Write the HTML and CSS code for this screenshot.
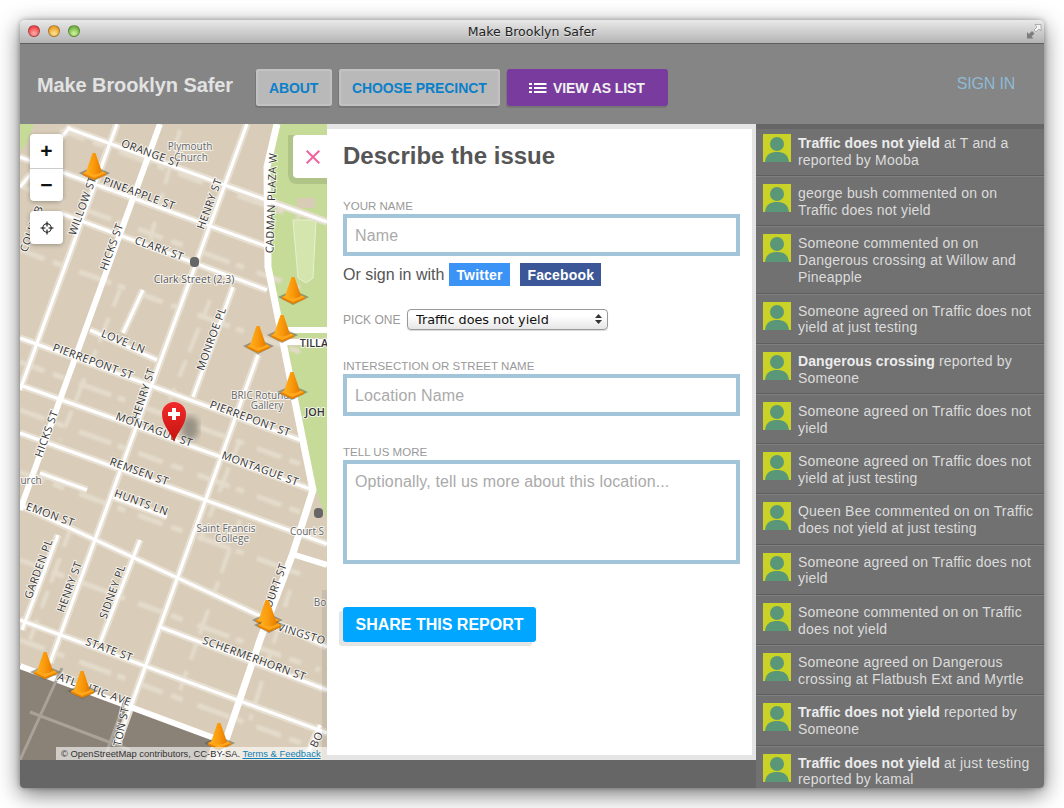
FILE: index.html
```html
<!DOCTYPE html>
<html lang="en">
<head>
<meta charset="utf-8">
<title>Make Brooklyn Safer</title>
<link rel="stylesheet" href="styles.css">
</head>
<body>
<div class="window">
  <div class="titlebar">
    <div class="lights"><span class="light red"></span><span class="light amber"></span><span class="light green"></span></div>
    <div class="win-title">Make Brooklyn Safer</div>
    <svg class="fullscreen" width="16" height="16" viewBox="0 0 16 16"><path d="M1 14.500V8l2 2 3-3 2.500 2.500-3 3 2 2z" fill="#7d7d7d"/><path d="M15 .5V7l-2-2-3 3-2-2 3-3-2-2.500z" fill="#f4f4f4" stroke="#8a8a8a" stroke-width=".6"/></svg>
  </div>
  <header class="topbar">
    <div class="brand">Make Brooklyn Safer</div>
    <nav class="nav">
      <a class="btn">ABOUT</a>
      <a class="btn">CHOOSE PRECINCT</a>
      <a class="btn btn-purple"><svg width="18" height="12" viewBox="0 0 18 12"><path d="M0 1h3v2H0zM0 5h3v2H0zM0 9h3v2H0zM5 1h12.500v2H5zM5 5h12.500v2H5zM5 9h12.500v2H5z" fill="#fff"/></svg>VIEW AS LIST</a>
    </nav>
    <a class="signin">SIGN IN</a>
  </header>
  <div class="content">
    <div class="left">
      <div class="stage">
        <div class="map">
          <svg class="map-art" width="307" height="636" viewBox="20 124 307 636">
            <defs>
              <linearGradient id="coneG" x1="0" x2="1" y1="0" y2="0"><stop offset="0" stop-color="#ffb01e"/><stop offset=".55" stop-color="#f9960a"/><stop offset="1" stop-color="#e27c00"/></linearGradient>
              <linearGradient id="pinG" x1="0" x2="0" y1="0" y2="1"><stop offset="0" stop-color="#f22a2a"/><stop offset="1" stop-color="#c4140f"/></linearGradient>
              <filter id="soft"><feGaussianBlur stdDeviation="3"/></filter>
              <filter id="yardBlur"><feGaussianBlur stdDeviation=".8"/></filter>
              <g id="cone">
                <path d="M-15 20L0 13 16 20 0 28z" fill="#5f5f50" opacity=".55"/>
                <path d="M-11 20L0 15 12 20V22L0 27-11 22z" fill="#e68200"/>
                <path d="M-11 20L0 15 12 20 0 25z" fill="#ffa81c"/>
                <path d="M-1.500 0H1.500L8 19Q0 24-8 19z" fill="url(#coneG)"/>
              </g>
              <g id="roads">
                <path d="M67 128L327 222"/><path d="M20 157L268 247"/><path d="M60 213L267 290"/>
                <path d="M20 338L300 440"/><path d="M20 385L313 490"/><path d="M20 433L327 544"/>
                <path d="M20 505L327 647"/><path d="M20 620L327 733"/>
                <path d="M160 627L327 690"/><path d="M40 473L87 490"/><path d="M113 497L167 517"/>
                <path d="M90 330L157 360"/><path d="M117 124L20 390"/><path d="M70 127L20 187"/>
                <path d="M247 124L50 663"/><path d="M233 287L193 397"/><path d="M258 355L117 745"/>
                <path d="M143 290L123 333"/><path d="M140 540L100 643"/><path d="M58 535L22 630"/>
                <path d="M320 725L305 760"/>
              </g>
            </defs>
            <rect class="ground" x="20" y="124" width="307" height="636"/>

            <path class="park" d="M272 124H327V338H285L270 270 270 170z"/>
            <path class="park" d="M286 346H327V520L316 490z"/>
            <path class="park" d="M20 124H34L26 145 20 150z"/>
            <path class="park-dark" d="M288 135H327V184H298Q288 184 288 174z"/>
            <rect class="lot" x="297" y="198" width="18" height="10"/>
            <path class="field" d="M293 220H316L313 278 306 283 298 278z"/>

            <g class="yards">
              <path d="M20 186L300 288"/><path d="M20 250L300 352"/><path d="M20 362L300 464"/><path d="M20 410L300 512"/>
              <path d="M20 472L300 574"/><path d="M20 560L320 670"/><path d="M20 640L320 750"/><path d="M60 130L300 218"/>
            </g>
            <g class="yards yards-b">
              <path d="M120 290L60 440"/><path d="M210 300L170 400"/><path d="M240 520L180 690"/><path d="M70 530L30 640"/>
              <path d="M180 130L150 240"/><path d="M240 440L200 540"/><path d="M290 590L250 720"/>
            </g>

            <path class="dark-zone" d="M20 664L214 738 206 760H20z"/>

            <use class="roads-under" href="#roads"/>
            <use class="roads-top" href="#roads"/>
            <g class="road-wide">
              <path d="M160 124L20 510"/>
              <path d="M286 330H327"/>
              <path d="M286 342H327"/>
              <path d="M20 666L214 738"/>
              <path d="M295 555L327 565"/>
            </g>
            <path class="road-xl" d="M277 124L267 167 268 267 290 377 313 490 293 553 260 640 227 737 216 760"/>
            <g class="road-dark"><path d="M62 668L20 760"/><path d="M30 712L130 750"/><path d="M125 700L104 760"/></g>

            <g class="lab">
              <text transform="translate(150 157) rotate(20)">ORANGE ST</text>
              <text transform="translate(138 197) rotate(20)">PINEAPPLE ST</text>
              <text transform="translate(158 252) rotate(20)">CLARK ST</text>
              <text transform="translate(213 205) rotate(-70)">HENRY ST</text>
              <text transform="translate(86 207) rotate(-70)">WILLOW ST</text>
              <text transform="translate(115 248) rotate(-70)">HICKS ST</text>
              <text transform="translate(35 230) rotate(-70)">COLUMB</text>
              <text transform="translate(275 203) rotate(-88)">CADMAN PLAZA W</text>
              <text transform="translate(122 345) rotate(22)">LOVE LN</text>
              <text transform="translate(92 365) rotate(20)">PIERREPONT ST</text>
              <text transform="translate(249 422) rotate(20)">PIERREPONT ST</text>
              <text transform="translate(215 340) rotate(-70)">MONROE PL</text>
              <text transform="translate(147 395) rotate(-72)">HENRY ST</text>
              <text transform="translate(153 433) rotate(20)">MONTAGUE ST</text>
              <text transform="translate(259 472) rotate(20)">MONTAGUE ST</text>
              <text transform="translate(50 435) rotate(-70)">HICKS ST</text>
              <text transform="translate(138 475) rotate(20)">REMSEN ST</text>
              <text transform="translate(140 506) rotate(20)">HUNTS LN</text>
              <text transform="translate(49 518) rotate(20)">EMON ST</text>
              <text transform="translate(42 570) rotate(-70)">GARDEN PL</text>
              <text transform="translate(73 588) rotate(-70)">HENRY ST</text>
              <text transform="translate(116 593) rotate(-70)">SIDNEY PL</text>
              <text transform="translate(108 653) rotate(20)">STATE ST</text>
              <text transform="translate(253 662) rotate(20)">SCHERMERHORN ST</text>
              <text transform="translate(93 693) rotate(20)">ATLANTIC AVE</text>
              <text transform="translate(279 587) rotate(-70)">OURT ST</text>
              <text transform="translate(296 636) rotate(17)">LIVINGSTO</text>
              <text transform="translate(125 727) rotate(-78)">TON ST</text>
              <text transform="translate(320 741) rotate(-65)">BO</text>
              <text class="tight" transform="translate(314 347)">TILLA</text>
              <text class="tight" transform="translate(315 416)">JOH</text>
            </g>
            <g class="poi">
              <text x="190" y="150">Plymouth</text>
              <text x="191" y="161">Church</text>
              <text x="194" y="283" class="poi-b">Clark Street (2,3)</text>
              <text x="263" y="399">BRIC Rotunda</text>
              <text x="267" y="409">Gallery</text>
              <text x="226" y="532">Saint Francis</text>
              <text x="232" y="542">College</text>
              <text x="307" y="535">Court S</text>
              <text x="31" y="484">urch</text>
              <text x="320" y="606">Bo</text>
            </g>
            <g class="metro">
              <rect x="190" y="257" width="9" height="10" rx="4"/>
              <rect x="314" y="508" width="9" height="10" rx="4"/>
            </g>
            <rect class="edge-shade" x="322" y="590" width="5" height="170"/>

            <use href="#cone" x="94" y="153"/>
            <use href="#cone" x="293" y="277"/>
            <use href="#cone" x="258" y="326"/>
            <use href="#cone" x="282" y="315"/>
            <use href="#cone" x="292" y="372"/>
            <use href="#cone" x="267" y="600"/>
            <use href="#cone" x="269" y="605"/>
            <use href="#cone" x="45" y="652"/>
            <use href="#cone" x="82" y="671"/>
            <use href="#cone" x="219" y="723"/>

            <ellipse cx="190" cy="428" rx="9" ry="12" fill="#333" opacity=".38" filter="url(#soft)"/>
            <path d="M174 442C170 431 162 425 162 414a12 12 0 1 1 24 0C186 425 178 431 174 442z" fill="url(#pinG)"/>
            <path d="M172 408h4v4h4v4h-4v4h-4v-4h-4v-4h4z" fill="#fff"/>
          </svg>
          <div class="zoom-ctl">
            <button class="ctl">+</button>
            <button class="ctl ctl-minus">&minus;</button>
          </div>
          <button class="locate"><svg width="14" height="14" viewBox="0 0 14 14"><circle cx="7" cy="7" r="4.200" fill="none" stroke="#111" stroke-width="1.100"/><path d="M7 .5v5M7 8.500v5M.5 7h5M8.500 7h5" stroke="#111" stroke-width="1.100"/></svg></button>
          <button class="close-tab"><svg width="14" height="14" viewBox="0 0 14 14"><path d="M.7 .7L13.300 13.300M13.300 .7L.7 13.300" stroke="#f2639d" stroke-width="2"/></svg></button>
          <div class="attrib">&copy; OpenStreetMap contributors, CC-BY-SA. <a>Terms &amp; Feedback</a></div>
        </div>
        <form class="panel">
          <h1>Describe the issue</h1>
          <label class="lbl">YOUR NAME</label>
          <input class="field-input" placeholder="Name">
          <div class="social">
            <span class="or">Or sign in with</span>
            <a class="soc twitter">Twitter</a>
            <a class="soc facebook">Facebook</a>
          </div>
          <div class="pick">
            <label class="lbl lbl-inline">PICK ONE</label>
            <div class="sel-wrap">
              <select class="sel"><option>Traffic does not yield</option></select>
              <svg class="sel-arrows" width="7" height="10" viewBox="0 0 7 10"><path d="M3.500 0L7 4H0zM3.500 10L0 6h7z" fill="#333"/></svg>
            </div>
          </div>
          <label class="lbl lbl-gap">INTERSECTION OR STREET NAME</label>
          <input class="field-input" placeholder="Location Name">
          <label class="lbl lbl-gap">TELL US MORE</label>
          <textarea class="field-input field-area" placeholder="Optionally, tell us more about this location..."></textarea>
          <button class="share" type="button">SHARE THIS REPORT</button>
        </form>
      </div>
      <div class="footer"></div>
    </div>
    <aside class="feed">
      <div class="item"><svg class="ava"><use href="#ava"/></svg><p><b>Traffic does not yield</b> at T and a reported by Mooba</p></div>
      <div class="item"><svg class="ava"><use href="#ava"/></svg><p>george bush commented on on Traffic does not yield</p></div>
      <div class="item"><svg class="ava"><use href="#ava"/></svg><p>Someone commented on on Dangerous crossing at Willow and Pineapple</p></div>
      <div class="item"><svg class="ava"><use href="#ava"/></svg><p>Someone agreed on Traffic does not yield at just testing</p></div>
      <div class="item"><svg class="ava"><use href="#ava"/></svg><p><b>Dangerous crossing</b> reported by Someone</p></div>
      <div class="item"><svg class="ava"><use href="#ava"/></svg><p>Someone agreed on Traffic does not yield</p></div>
      <div class="item"><svg class="ava"><use href="#ava"/></svg><p>Someone agreed on Traffic does not yield at just testing</p></div>
      <div class="item"><svg class="ava"><use href="#ava"/></svg><p>Queen Bee commented on on Traffic does not yield at just testing</p></div>
      <div class="item"><svg class="ava"><use href="#ava"/></svg><p>Someone agreed on Traffic does not yield</p></div>
      <div class="item"><svg class="ava"><use href="#ava"/></svg><p>Someone commented on on Traffic does not yield</p></div>
      <div class="item"><svg class="ava"><use href="#ava"/></svg><p>Someone agreed on Dangerous crossing at Flatbush Ext and Myrtle</p></div>
      <div class="item"><svg class="ava"><use href="#ava"/></svg><p><b>Traffic does not yield</b> reported by Someone</p></div>
      <div class="item"><svg class="ava"><use href="#ava"/></svg><p><b>Traffic does not yield</b> at just testing reported by kamal</p></div>
    </aside>
  </div>
</div>
<svg class="defs-only" width="0" height="0"><defs><g id="ava"><rect width="28" height="28" fill="#c9d227"/><circle cx="14" cy="10" r="7" fill="#5a9678"/><path d="M2 28C3 20 8 18 14 18S25 20 26 28z" fill="#5a9678"/></g></defs></svg>
</body>
</html>
```

FILE: styles.css
```css
* { box-sizing: border-box; }
html, body { margin: 0; height: 100%; background: #fff; overflow: hidden; }
body { padding: 20px; font-family: "Liberation Sans", Arial, sans-serif; }
.defs-only { position: absolute; }

.window {
  width: 1024px; height: 768px; display: flex; flex-direction: column;
  border-radius: 5px 5px 4px 4px; overflow: hidden;
  box-shadow: 0 6px 22px rgba(0,0,0,.55), 0 0 5px rgba(0,0,0,.3);
}

.titlebar {
  height: 24px; flex: none; display: flex; align-items: center; justify-content: center;
  position: relative; background: linear-gradient(#e9e9e9, #b4b4b4);
  border-bottom: 1px solid #5e5e5e;
}
.lights { position: absolute; left: 8px; top: 5px; display: flex; gap: 8px; }
.light { width: 12px; height: 12px; border-radius: 50%; border: 1px solid rgba(0,0,0,.3); }
.red { background: radial-gradient(circle at 50% 75%, #ffb0a8, #f0474c 70%); }
.amber { background: radial-gradient(circle at 50% 75%, #ffe590, #eba02e 70%); }
.green { background: radial-gradient(circle at 50% 75%, #d2f5a0, #74b544 70%); }
.win-title { font: 12.500px "DejaVu Sans", sans-serif; color: #222; text-shadow: 0 1px 0 rgba(255,255,255,.5); }
.fullscreen { position: absolute; right: 2px; top: 4px; }

.topbar {
  height: 80px; flex: none; display: flex; align-items: center; background: #858585;
  padding: 0 29px 0 17px;
}
.brand { font-size: 20px; font-weight: 700; letter-spacing: -.1px; color: #e2e2e2; margin: 2px 22px 0 0; white-space: nowrap; width: 197px; }
.nav { display: flex; gap: 7px; margin-top: 6px; }
.btn {
  height: 37px; padding: 2px 13px 0; display: flex; align-items: center; gap: 6px;
  background: #b9b9b9; color: #0b80c9; font-size: 14px; font-weight: 700; letter-spacing: -.1px;
  border-radius: 3px; box-shadow: -1px 2px 0 #767676, inset 0 0 0 2px #c2c2c2; white-space: nowrap;
}
.btn:nth-child(1) { width: 76px; }
.btn:nth-child(2) { width: 161px; }
.btn-purple { background: #7a3b9f; color: #f1f1f1; width: 161px; padding-left: 22px; box-shadow: -1px 2px 0 #767676; }
.signin { margin-left: auto; font-size: 16px; letter-spacing: -.2px; color: #8ebad5; margin-top: 0; padding-left: 1px; }

.content { flex: 1; display: flex; min-height: 0; }
.left { width: 736px; flex: none; display: flex; flex-direction: column; }
.stage { flex: 1; display: flex; min-height: 0; }
.footer { height: 28px; flex: none; background: #666; }

.map { width: 307px; flex: none; position: relative; overflow: hidden; }
.map-art { display: block; }
.ground { fill: #d9cdb9; }
.park { fill: #c6db98; }
.park-dark { fill: #afc486; }
.lot { fill: #d9ccb6; }
.field { fill: #d4e6ae; stroke: #e6f0d2; }
.yards { filter: url(#yardBlur); }
.yards path { fill: none; stroke: #e4dbcb; stroke-width: 5; stroke-dasharray: 26 9 12 16 34 7 8 14; }
.yards-b path { stroke-width: 4; stroke-dasharray: 18 12 26 9; }
.dark-zone { fill: #8a8177; }
.roads-under { fill: none; stroke: #e7dfd1; stroke-width: 7.500; }
.roads-top { fill: none; stroke: #fff; stroke-width: 3.200; }
.road-wide path { fill: none; stroke: #fff; stroke-width: 6; }
.road-xl { fill: none; stroke: #fff; stroke-width: 7; }
.road-dark path { fill: none; stroke: #a8a299; stroke-width: 3; }
.edge-shade { fill: #000; opacity: .07; }

.lab text, .poi text {
  font-family: "Open Sans", sans-serif; text-anchor: middle; paint-order: stroke;
  stroke: rgba(255,255,255,.75); stroke-width: 2px;
}
.lab text { font-size: 10.800px; font-weight: 500; letter-spacing: .5px; fill: #333; }
.lab .tight { letter-spacing: 0; font-weight: 600; }
.poi text { font-size: 10px; fill: #666; }
.poi .poi-b { fill: #555; font-size: 10.500px; }
.metro rect { fill: #666; }

.zoom-ctl, .locate {
  position: absolute; left: 10px; width: 33px; background: #fff; border-radius: 4px;
  box-shadow: 0 1px 4px rgba(0,0,0,.3);
}
.zoom-ctl { top: 10px; height: 67px; display: flex; flex-direction: column; }
.ctl {
  height: 33.500px; border: 0; padding: 0; background: none; color: #111;
  font: 700 21px/1 "Liberation Sans", sans-serif;
}
.ctl-minus { border-top: 1px solid #ccc; }
.locate { top: 87px; height: 33px; border: 0; padding: 0; display: flex; align-items: center; justify-content: center; }
.close-tab {
  position: absolute; right: 0; top: 11px; width: 34px; height: 43px; border: 0; padding: 1px 0 0 6px;
  background: #fff; border-radius: 4px 0 0 4px; display: flex; align-items: center; justify-content: center;
}
.attrib {
  position: absolute; right: 0; bottom: 0; width: 271px; height: 13px; padding-left: 5px;
  background: rgba(255,255,255,.6); font-size: 9.400px; line-height: 13px; color: #333; white-space: nowrap;
}
.attrib a { color: #0f7fb5; text-decoration: underline; }

.panel {
  width: 429px; flex: none; background: #fff; padding: 13px 12px 0 16px;
  border-top: 5px solid #e5e5e5; border-right: 4px solid #e5e5e5; border-bottom: 5px solid #e5e5e5;
  display: flex; flex-direction: column; align-items: flex-start;
}
h1 { margin: 0 0 29px; font-size: 24px; line-height: 28px; font-weight: 700; color: #555; }
.lbl { display: block; font-size: 11.500px; line-height: 14px; color: #999; margin-bottom: 1px; letter-spacing: .02px; }
.lbl-gap { margin-top: 29px; }
.lbl-inline { margin: 0; font-size: 12px; }
.field-input {
  display: block; width: 397px; height: 42px; border: 4px solid #a3c5da; background: #fff;
  padding: 2px 8px 0; font: 16px "Liberation Sans", sans-serif; letter-spacing: .13px; color: #444; outline: 0; border-radius: 0;
}
.field-input::placeholder { color: #aaa; opacity: 1; }
.field-area { height: 104px; padding-top: 9px; resize: none; }
.social { display: flex; align-items: center; margin-top: 7px; height: 23px; }
.or { font-size: 16px; color: #555; margin-right: 5px; }
.soc { height: 23px; line-height: 24px; padding: 0 7px; color: #fff; font-size: 14px; font-weight: 700; letter-spacing: .2px; }
.twitter { background: #3a93f5; width: 61px; margin-right: 10px; }
.facebook { background: #3b5798; width: 81px; }
.pick { display: flex; align-items: center; margin-top: 23px; height: 21px; }
.pick .lbl { width: 64px; }
.sel-wrap { position: relative; width: 201px; height: 21px; }
.sel {
  appearance: none; -webkit-appearance: none; display: block; width: 100%; height: 100%; padding: 0 8px;
  border: 1px solid #999; border-radius: 4px; background: linear-gradient(#fff 30%, #e6e6e6);
  font: 12.800px "DejaVu Sans", sans-serif; color: #111; box-shadow: 0 1px 1px rgba(0,0,0,.15);
}
.sel-arrows { position: absolute; right: 6px; top: 5px; }
.share {
  margin-top: 43px; width: 193px; height: 35px; border: 0; padding: 1px 0 0; border-radius: 3px;
  background: #00a6ff; color: #fff; font: 700 16px "Liberation Sans", sans-serif;
  box-shadow: -4px 4px 0 #e5e5e5;
}

.feed { flex: 1; background: #717171; overflow: hidden; border-top: 5px solid #666; }
.item { display: flex; gap: 7px; padding: 8px 7px 6.650px; border-bottom: 1px solid #5f5f5f; box-shadow: 0 1px 0 #808080; }
.item:first-child { margin-top: -3px; }
.ava { width: 28px; height: 28px; flex: none; }
.item p { margin: 1px 0 0; font-size: 14px; line-height: 16.800px; letter-spacing: .2px; color: #dcdcdc; width: 240px; }
.item b { font-weight: 700; color: #ececec; letter-spacing: .08px; }
```
